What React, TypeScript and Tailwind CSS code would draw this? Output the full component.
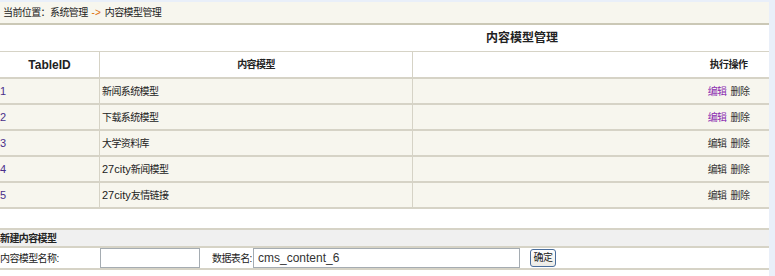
const rows = [
  { id: 1, prefix: "", name: "新闻系统模型", visited: true },
  { id: 2, prefix: "", name: "下载系统模型", visited: true },
  { id: 3, prefix: "", name: "大学资料库", visited: false },
  { id: 4, prefix: "27city", name: "新闻模型", visited: false },
  { id: 5, prefix: "27city", name: "友情链接", visited: false },
];

const font = "font-['Liberation_Sans','Noto_Sans_CJK_SC',sans-serif]";
// CJK glyphs in the original are narrow bitmap glyphs (~9.3px per char)
const cjk = "text-[10px] tracking-[-0.6px]";

export default function App() {
  return (
    <div className={`w-[775px] h-[276px] bg-[#e9eff9] pt-[2px] text-[12px] text-[#222] ${font}`}>
      <div className="w-[769px] h-[274px] overflow-hidden bg-white">
        {/* breadcrumb */}
        <div className={`h-[23px] bg-[#f7f6ee] border-b-2 border-[#cbc8b6] flex items-center pl-[3px] leading-none ${cjk}`}>
          当前位置：系统管理
          <span className="text-[#e0700b] mx-[4px] tracking-normal">-&gt;</span>
          内容模型管理
        </div>

        <div className="w-[1044px]">
          <div className="h-[27px] border-b border-[#d6d3c6] flex items-center justify-center font-bold">
            内容模型管理
          </div>
          <div className="h-[27px] grid grid-cols-[100px_313px_1fr] border-b-2 border-[#d6d3c6] font-bold">
            <div className="flex items-center justify-center border-r border-[#d6d3c6]">TableID</div>
            <div className={`flex items-center justify-center border-r border-[#d6d3c6] ${cjk}`}>内容模型</div>
            <div className={`flex items-center justify-center ${cjk}`}>执行操作</div>
          </div>
          {rows.map((r) => (
            <div
              key={r.id}
              className="h-[26px] grid grid-cols-[100px_313px_1fr] bg-[#f7f6ee] border-b-2 border-[#d6d3c6]"
            >
              <div className="flex items-center border-r border-[#d6d3c6] text-[#4a2f8a] text-[11px]">
                {r.id}
              </div>
              <div className="flex items-center border-r border-[#d6d3c6] pl-[2px]">
                {r.prefix && <span className="text-[11px]">{r.prefix}</span>}
                <span className={cjk}>{r.name}</span>
              </div>
              <div className={`flex items-center justify-center gap-[4px] ${cjk}`}>
                <span className={r.visited ? "text-[#8a2bb0]" : "text-[#333]"}>编辑</span>
                <span className="text-[#333]">删除</span>
              </div>
            </div>
          ))}
        </div>

        <div className="h-[19px]" />

        {/* new model */}
        <div className={`h-[18px] bg-[#f0f0f0] border-t-2 border-[#d6d3c6] flex items-center font-bold ${cjk}`}>
          新建内容模型
        </div>
        <div className="h-[24px] border-t-2 border-b-2 border-[#d6d3c6] flex items-center">
          <span className={`w-[100px] ${cjk}`}>内容模型名称:</span>
          <input
            className="w-[100px] h-[20px] border border-[#a5acb2] bg-white outline-none"
            defaultValue=""
          />
          <span className={`ml-[12px] w-[41px] ${cjk}`}>数据表名:</span>
          <input
            className="w-[267px] h-[20px] border border-[#a5acb2] bg-white px-[4px] text-[#333] outline-none"
            defaultValue="cms_content_6"
          />
          <button className={`ml-[10px] w-[26px] h-[18px] border border-[#4b6e9c] rounded-[3px] bg-gradient-to-b from-white to-[#ecebe6] leading-none flex items-center justify-center ${cjk}`}>
            确定
          </button>
        </div>
      </div>
    </div>
  );
}
